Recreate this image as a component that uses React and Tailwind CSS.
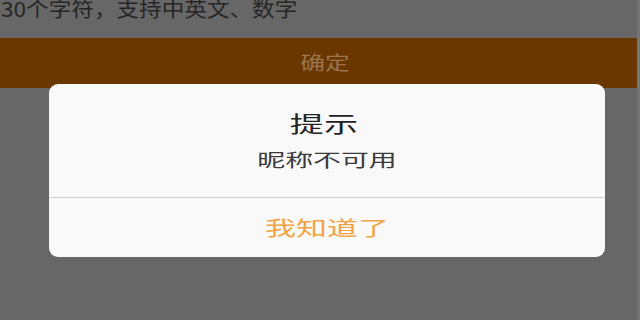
export default function App() {
  return (
    <div
      className="relative w-[640px] h-[320px] overflow-hidden bg-[#676767] flex"
      style={{ fontFamily: '"Noto Sans CJK SC", "Noto Sans", sans-serif' }}
    >
      {/* page behind the overlay */}
      <div className="flex-1 flex flex-col">
        <div className="h-[43px] -mt-[5px] ml-[1px] text-[20px] leading-[28px] text-[#262626]">
          <span className="inline-block origin-left scale-x-[1.13] whitespace-nowrap">
            30个字符，支持中英文、数字
          </span>
        </div>
        <div className="h-[50px] bg-[#6a3700] flex items-center justify-center pl-[14px] pb-[2px]">
          <span className="inline-block text-[19px] text-[#9c7650] scale-x-[1.3]">确定</span>
        </div>
      </div>
      <div className="w-[3px] bg-[#757575]" />

      {/* alert */}
      <div className="absolute left-[49px] top-[84px] w-[556px] h-[173px] rounded-[9px] bg-[#f9f9f9] flex flex-col">
        <div className="h-[113px] flex flex-col items-center pt-[24px] gap-[11px]">
          <span className="inline-block text-[22px] leading-[28px] text-[#222] scale-x-[1.55] pr-[4px]">
            提示
          </span>
          <span className="inline-block text-[18px] leading-[24px] text-[#3a3a3a] scale-x-[1.55]">
            昵称不可用
          </span>
        </div>
        <div className="h-px bg-[#cfcfcf]" />
        <div className="flex-1 flex items-center justify-center">
          <span className="inline-block text-[20px] text-[#f2a443] scale-x-[1.55]">我知道了</span>
        </div>
      </div>
    </div>
  );
}
